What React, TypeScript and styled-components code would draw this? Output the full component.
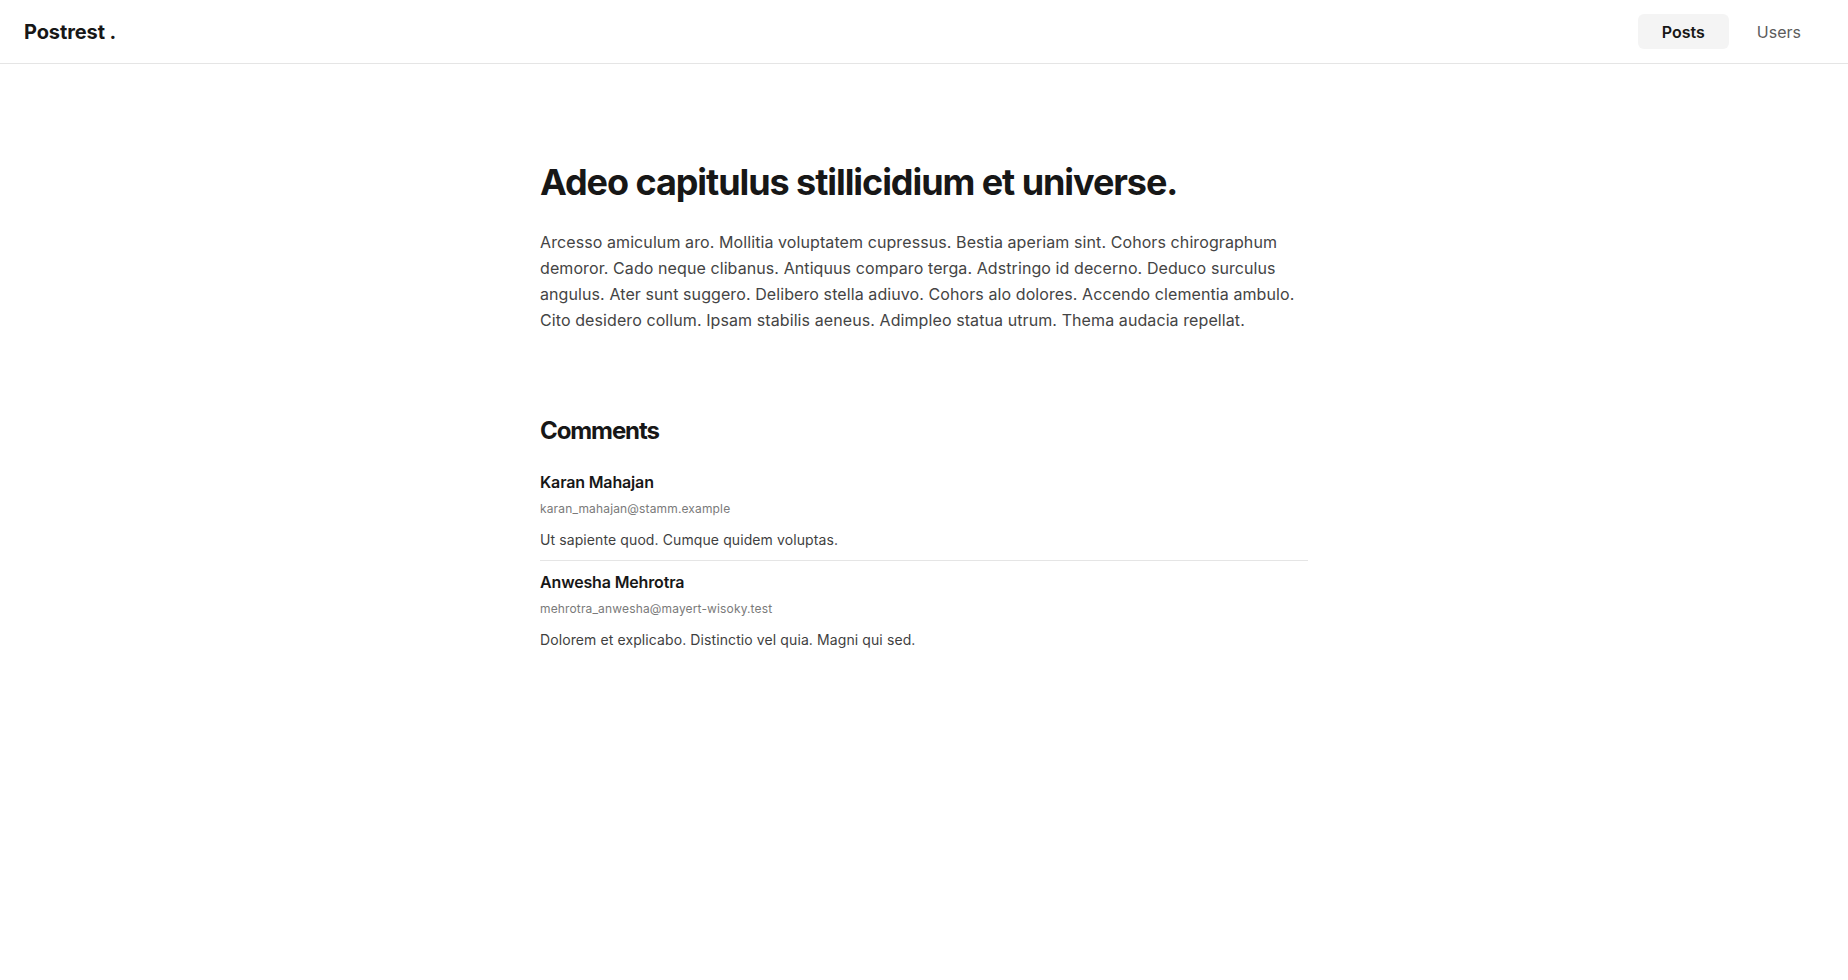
import React from "react";
import styled, { createGlobalStyle } from "styled-components";

const GlobalStyle = createGlobalStyle`
  * { box-sizing: border-box; }
  html, body { margin: 0; padding: 0; background: #ffffff; }
  body {
    font-family: Inter, "Noto Sans", "Liberation Sans", sans-serif;
    color: #171717;
    -webkit-font-smoothing: antialiased;
  }
`;

const Header = styled.header`
  height: 64px;
  border-bottom: 1px solid #e5e5e5;
  display: flex;
  align-items: center;
  justify-content: space-between;
  padding: 0 23px 0 24px;
`;

const Logo = styled.div`
  font-size: 20px;
  font-weight: 700;
  letter-spacing: -0.1px;
  color: #171717;
`;

const Nav = styled.nav`
  display: flex;
  gap: 4px;
  align-items: center;
`;

const NavButton = styled.a<{ $active?: boolean }>`
  display: inline-flex;
  align-items: center;
  height: 35px;
  padding: 0 24px;
  border-radius: 6px;
  font-size: 16px;
  text-decoration: none;
  cursor: pointer;
  background: ${(p) => (p.$active ? "#f4f4f4" : "transparent")};
  color: ${(p) => (p.$active ? "#171717" : "#5c5c5c")};
  font-weight: ${(p) => (p.$active ? 600 : 400)};
`;

const Main = styled.main`
  max-width: 768px;
  margin: 0 auto;
  padding: 98px 0 80px;
`;

const Title = styled.h1`
  margin: 0 0 27px;
  font-size: 36px;
  line-height: 40px;
  font-weight: 700;
  letter-spacing: -1.07px;
  color: #171717;
`;

const Body = styled.p`
  margin: 0;
  font-size: 16px;
  line-height: 26px;
  color: #444444;
  letter-spacing: 0.09px;
`;

const CommentsSection = styled.section`
  margin-top: 82px;
`;

const CommentsHeading = styled.h2`
  margin: 0 0 14px;
  font-size: 24px;
  line-height: 32px;
  font-weight: 700;
  letter-spacing: -1.1px;
  color: #171717;
`;

const CommentItem = styled.div<{ $last?: boolean }>`
  padding: 9px 0 10px;
  border-bottom: ${(p) => (p.$last ? "none" : "1px solid #e5e5e5")};
`;

const CommentName = styled.div`
  font-size: 16px;
  line-height: 24px;
  font-weight: 600;
  color: #171717;
  letter-spacing: -0.15px;
`;

const CommentEmail = styled.div`
  margin-top: 7px;
  font-size: 12px;
  line-height: 16px;
  color: #7a7a7a;
  letter-spacing: 0.15px;
`;

const CommentBody = styled.p`
  margin: 13px 0 0;
  font-size: 14px;
  line-height: 20px;
  color: #3f3f3f;
  letter-spacing: 0.1px;
`;

const comments = [
  {
    name: "Karan Mahajan",
    email: "karan_mahajan@stamm.example",
    body: "Ut sapiente quod. Cumque quidem voluptas.",
  },
  {
    name: "Anwesha Mehrotra",
    email: "mehrotra_anwesha@mayert-wisoky.test",
    body: "Dolorem et explicabo. Distinctio vel quia. Magni qui sed.",
  },
];

export default function App() {
  return (
    <>
      <GlobalStyle />
      <Header>
        <Logo>Postrest .</Logo>
        <Nav>
          <NavButton $active>Posts</NavButton>
          <NavButton>Users</NavButton>
        </Nav>
      </Header>
      <Main>
        <Title>Adeo capitulus stillicidium et universe.</Title>
        <Body>
          Arcesso amiculum aro. Mollitia voluptatem cupressus. Bestia aperiam sint. Cohors chirographum
          demoror. Cado neque clibanus. Antiquus comparo terga. Adstringo id decerno. Deduco surculus
          angulus. Ater sunt suggero. Delibero stella adiuvo. Cohors alo dolores. Accendo clementia ambulo.
          Cito desidero collum. Ipsam stabilis aeneus. Adimpleo statua utrum. Thema audacia repellat.
        </Body>
        <CommentsSection>
          <CommentsHeading>Comments</CommentsHeading>
          {comments.map((c, i) => (
            <CommentItem key={c.email} $last={i === comments.length - 1}>
              <CommentName>{c.name}</CommentName>
              <CommentEmail>{c.email}</CommentEmail>
              <CommentBody>{c.body}</CommentBody>
            </CommentItem>
          ))}
        </CommentsSection>
      </Main>
    </>
  );
}
